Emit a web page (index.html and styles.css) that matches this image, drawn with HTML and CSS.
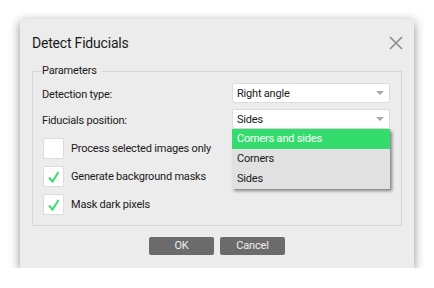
FILE: index.html
```html
<!DOCTYPE html>
<html lang="en">
<head>
  <meta charset="UTF-8">
  <meta name="viewport" content="width=device-width, initial-scale=1.0">
  <title>Detect Fiducials</title>
  <link rel="stylesheet" href="styles.css">
</head>

<body>
  <div class="dialog">
    <div class="dialog-head">
      <h1>Detect Fiducials</h1>
      <button class="close" aria-label="Close">
        <svg width="14" height="14" viewBox="0 0 14 14">
          <path d="M1 1 L13 13 M13 1 L1 13" stroke="#8a8a8a" stroke-width="1.6" fill="none" />
        </svg>
      </button>
    </div>

    <fieldset class="group">
      <legend>Parameters</legend>

      <div class="form-grid">
        <span class="label">Detection type:</span>
        <div class="combo">
          <span>Right angle</span>
          <i class="arrow"></i>
        </div>

        <span class="label">Fiducials position:</span>
        <div class="combo open">
          <span>Sides</span>
          <i class="arrow"></i>
          <ul class="dropdown">
            <li class="active">Corners and sides</li>
            <li>Corners</li>
            <li>Sides</li>
          </ul>
        </div>
      </div>

      <div class="checks">
        <label class="check">
          <span class="box"></span>
          <span>Process selected images only</span>
        </label>
        <label class="check">
          <span class="box">
            <svg width="21" height="21" viewBox="0 0 21 21">
              <path d="M6 11.5 L9.5 15.5 L15.5 6" stroke="#3ddc6e" stroke-width="2" fill="none" />
            </svg>
          </span>
          <span>Generate background masks</span>
        </label>
        <label class="check">
          <span class="box">
            <svg width="21" height="21" viewBox="0 0 21 21">
              <path d="M6 11.5 L9.5 15.5 L15.5 6" stroke="#3ddc6e" stroke-width="2" fill="none" />
            </svg>
          </span>
          <span>Mask dark pixels</span>
        </label>
      </div>
    </fieldset>

    <div class="actions">
      <button class="btn">OK</button>
      <button class="btn">Cancel</button>
    </div>
  </div>
</body>
</html>
```

FILE: styles.css
```css
* {
  margin: 0;
  padding: 0;
  box-sizing: border-box;
  font-family: Roboto, 'Open Sans', sans-serif;
  color: #1a1a1a;
  letter-spacing: -0.2px;
}

body {
  background: #ffffff;
}

.dialog {
  width: 394px;
  height: 249px;
  margin: 19px 0 0 20px;
  padding: 14px 12px 12px;
  background: #ececec;
  box-shadow: 0 3px 10px rgba(0, 0, 0, 0.45);
  display: flex;
  flex-direction: column;
}

.dialog-head {
  display: flex;
  justify-content: space-between;
  align-items: center;
  height: 20px;
  margin-bottom: 11px;
}

h1 {
  font-size: 14px;
  font-weight: 400;
  line-height: 20px;
}

.close {
  border: none;
  background: none;
  display: flex;
  margin-right: -1px;
}

.group {
  border: 1px solid #d6d6d6;
  padding: 5px 11px 10px 9px;
}

legend {
  font-size: 11px;
  line-height: 14px;
  padding: 0 5px 0 0;
}

.form-grid {
  display: grid;
  grid-template-columns: 190px 158px;
  grid-auto-rows: 20px;
  row-gap: 6px;
  align-items: center;
}

.label {
  font-size: 11px;
  padding-top: 2px;
}

.combo {
  position: relative;
  height: 20px;
  background: #ffffff;
  border: 1px solid #dcdcdc;
  border-radius: 2px;
  padding-left: 4px;
  display: flex;
  align-items: center;
  font-size: 11px;
}

.arrow {
  position: absolute;
  right: 5px;
  top: 7px;
  width: 0;
  height: 0;
  border-left: 4px solid transparent;
  border-right: 4px solid transparent;
  border-top: 4px solid #a8a8a8;
}

.dropdown {
  position: absolute;
  top: 19px;
  left: -1px;
  width: 158px;
  list-style: none;
  background: #e1e1e1;
  box-shadow: 2px 2px 3px rgba(0, 0, 0, 0.45);
  z-index: 2;
}

.dropdown li {
  height: 20px;
  line-height: 20px;
  padding-left: 5px;
  font-size: 11px;
}

.dropdown li.active {
  background: #34dc6d;
  color: #ffffff;
}

.checks {
  display: flex;
  flex-direction: column;
  gap: 7px;
  margin-top: 9px;
}

.check {
  display: flex;
  align-items: center;
  gap: 7px;
  font-size: 11px;
  margin-left: 1px;
}

.box {
  width: 21px;
  height: 21px;
  background: #ffffff;
  border: 1px solid #dcdcdc;
  border-radius: 2px;
  display: flex;
}

.box svg {
  margin: -1px;
}

.actions {
  display: flex;
  justify-content: center;
  gap: 6px;
  margin-top: 11px;
}

.btn {
  width: 65px;
  height: 18px;
  border: none;
  border-radius: 2px;
  background: #6b6b6b;
  color: #f0f0f0;
  font-size: 11px;
  line-height: 18px;
}
```
